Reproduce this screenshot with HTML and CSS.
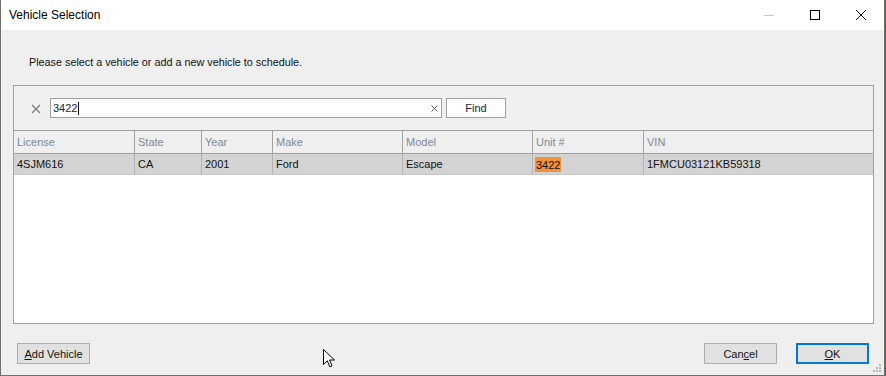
FILE: index.html
```html
<!DOCTYPE html>
<html lang="en">
<head>
    <meta charset="UTF-8">
    <title>Vehicle Selection</title>
    <link rel="stylesheet" href="styles.css">
</head>
<body>
    <div class="window">
        <!-- 标题栏 -->
        <header class="titlebar">
            <span class="title">Vehicle Selection</span>
            <div class="caption">
                <span class="cap-btn min"><svg width="10" height="10" viewBox="0 0 10 10"><path d="M0 5.5H10" stroke="#c4c4c4" stroke-width="1"/></svg></span>
                <span class="cap-btn"><svg width="10" height="10" viewBox="0 0 10 10"><rect x="0.5" y="0.5" width="9" height="9" fill="none" stroke="#000" stroke-width="1"/></svg></span>
                <span class="cap-btn"><svg width="10" height="10" viewBox="0 0 10 10"><path d="M0 0L10 10M10 0L0 10" stroke="#000" stroke-width="1"/></svg></span>
            </div>
        </header>

        <div class="client">
            <p class="prompt">Please select a vehicle or add a new vehicle to schedule.</p>

            <section class="panel">
                <div class="search-row">
                    <svg class="clear-icon" width="10" height="10" viewBox="0 0 10 10"><path d="M1 1L9 9M9 1L1 9" stroke="#7a7a7a" stroke-width="1.2"/></svg>
                    <div class="search-box">
                        <span class="search-text">3422</span><span class="caret"></span>
                        <svg class="box-x" width="7" height="7" viewBox="0 0 7 7"><path d="M0.5 0.5L6.5 6.5M6.5 0.5L0.5 6.5" stroke="#555" stroke-width="1"/></svg>
                    </div>
                    <button class="find-btn">Find</button>
                </div>

                <div class="grid">
                    <div class="cell head">License</div>
                    <div class="cell head">State</div>
                    <div class="cell head">Year</div>
                    <div class="cell head">Make</div>
                    <div class="cell head">Model</div>
                    <div class="cell head">Unit #</div>
                    <div class="cell head last">VIN</div>

                    <div class="cell row">4SJM616</div>
                    <div class="cell row">CA</div>
                    <div class="cell row">2001</div>
                    <div class="cell row">Ford</div>
                    <div class="cell row">Escape</div>
                    <div class="cell row"><mark class="hit">3422</mark></div>
                    <div class="cell row last">1FMCU03121KB59318</div>
                </div>
                <div class="grid-empty"></div>
            </section>

            <footer class="footer">
                <button class="btn"><u>A</u>dd Vehicle</button>
                <div class="footer-right">
                    <button class="btn">Can<u>c</u>el</button>
                    <button class="btn ok"><u>O</u>K</button>
                </div>
            </footer>
        </div>

        <!-- 鼠标指针 -->
        <svg class="pointer" width="13" height="20" viewBox="0 0 13 20">
            <path d="M0.5 0.5V15.5L4.3 11.8L6.8 17.8L9 16.9L6.6 11H11.5Z" fill="#fff" stroke="#000" stroke-width="1" stroke-linejoin="miter"/>
        </svg>
        <!-- 右下角的拖拽点 -->
        <svg class="grip" width="10" height="10" viewBox="0 0 10 10">
            <rect x="7" y="1" width="2" height="2" fill="#b8b8b8"/>
            <rect x="4" y="4" width="2" height="2" fill="#b8b8b8"/>
            <rect x="7" y="4" width="2" height="2" fill="#b8b8b8"/>
            <rect x="1" y="7" width="2" height="2" fill="#b8b8b8"/>
            <rect x="4" y="7" width="2" height="2" fill="#b8b8b8"/>
            <rect x="7" y="7" width="2" height="2" fill="#b8b8b8"/>
        </svg>
    </div>
</body>
</html>
```

FILE: styles.css
```css
/* 对话框整体 */
body {
    margin: 0;
    background-color: #5c5c50;
    font-family: "Liberation Sans", Arial, sans-serif;
    font-size: 11px;
    color: #111;
}

.window {
    position: relative;
    box-sizing: border-box;
    width: 885px;
    height: 376px;
    background-color: #efefef;
    border: 1px solid #6f6f6f;
    border-top: none;
    display: flex;
    flex-direction: column;
}

/* 标题栏 */
.titlebar {
    height: 30px;
    background-color: #fff;
    display: flex;
    justify-content: space-between;
    align-items: center;
}

.titlebar .title {
    font-size: 12px;
    color: #000;
    padding-left: 8px;
    padding-bottom: 1px;
}

.caption {
    display: flex;
    height: 30px;
}

.cap-btn {
    width: 46px;
    display: flex;
    align-items: center;
    justify-content: center;
}

.cap-btn svg {
    display: block;
}

/* 内容区 */
.client {
    flex: 1;
    display: flex;
    flex-direction: column;
}

.prompt {
    margin: 0;
    padding: 26px 0 0 28px;
    height: 13px;
    line-height: 13px;
    font-size: 10.8px;
    color: #111;
}

.panel {
    margin: 16px 0 0 12px;
    width: 861px;
    height: 239px;
    box-sizing: border-box;
    border: 1px solid #a0a0a0;
    background-color: #fff;
    display: flex;
    flex-direction: column;
}

.search-row {
    height: 44px;
    background-color: #efefef;
    display: flex;
    align-items: flex-start;
    padding-left: 17px;
    padding-top: 12px;
    box-sizing: border-box;
}

.clear-icon {
    margin-top: 6px;
    margin-right: 9px;
}

.search-box {
    position: relative;
    box-sizing: border-box;
    width: 392px;
    height: 20px;
    background-color: #fff;
    border: 1px solid #a0a0a0;
    display: flex;
    align-items: center;
    padding-left: 2px;
}

.search-text {
    color: #1a1a40;
}

.caret {
    display: inline-block;
    width: 1px;
    height: 13px;
    background-color: #000;
    margin-left: 1px;
}

.box-x {
    position: absolute;
    right: 3px;
    top: 6px;
}

.find-btn {
    margin-left: 4px;
    width: 60px;
    height: 20px;
    box-sizing: border-box;
    background-color: #fff;
    border: 1px solid #a0a0a0;
    font-family: inherit;
    font-size: 11px;
    color: #1a1a40;
    padding: 0;
}

/* 表格 */
.grid {
    display: grid;
    grid-template-columns: 121px 67px 71px 130px 130px 111px 1fr;
}

.cell {
    box-sizing: border-box;
    padding-left: 3px;
    border-right: 1px solid #a0a0a0;
    white-space: nowrap;
    display: flex;
    align-items: center;
}

.cell.last {
    border-right: none;
}

.cell.head {
    height: 24px;
    background-color: #efefef;
    color: #7d8896;
    border-top: 1px solid #a0a0a0;
    border-bottom: 1px solid #a0a0a0;
}

.cell.row {
    height: 21px;
    background-color: #d3d3d3;
    color: #111;
    border-right-color: #b4b4b4;
    border-bottom: 1px solid #c6c6c6;
}

.hit {
    background-color: #f0913b;
    color: #111;
    padding: 2px 1px 1px;
    margin-left: -1px;
}

.grid-empty {
    flex: 1;
    background-color: #fff;
}

/* 底部按钮 */
.footer {
    display: flex;
    justify-content: space-between;
    padding: 19px 15px 0 16px;
}

.footer-right {
    display: flex;
    gap: 19px;
}

.btn {
    width: 73px;
    height: 21px;
    box-sizing: border-box;
    background-color: #e1e1e1;
    border: 1px solid #adadad;
    font-family: inherit;
    font-size: 11px;
    color: #111;
    padding: 0;
}

.btn.ok {
    border: 2px solid #0078d7;
}

.pointer {
    position: absolute;
    left: 322px;
    top: 349px;
}

.grip {
    position: absolute;
    right: 2px;
    bottom: 2px;
}
```
